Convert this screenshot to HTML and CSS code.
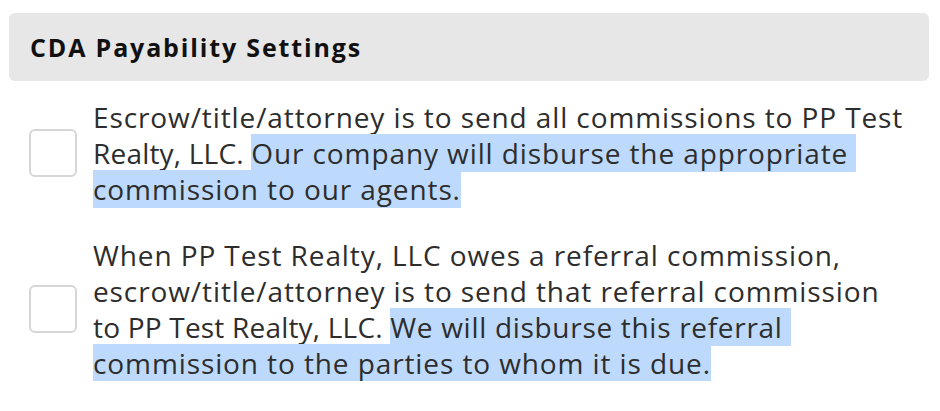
FILE: index.html
```html
<!DOCTYPE html>
<html lang="en">
<head>
<meta charset="utf-8">
<title>CDA Payability Settings</title>
<link rel="stylesheet" href="styles.css">
</head>
<body>
<div class="panel">
  <div class="section-header">
    <h2 class="section-title">CDA Payability Settings</h2>
  </div>
  <ul class="options">
    <li class="option">
      <input class="checkbox" type="checkbox" aria-label="Send all commissions to brokerage">
      <p class="option-text">Escrow/title/attorney is to send all commissions to PP Test<br><span class="lead">Realty, LLC. </span><span class="sel">Our company will disburse the appropriate&nbsp;</span><br><span class="sel">commission to our agents.</span></p>
    </li>
    <li class="option">
      <input class="checkbox" type="checkbox" aria-label="Send referral commission to brokerage">
      <p class="option-text">When PP Test Realty, LLC owes a referral commission,<br>escrow/title/attorney is to send that referral commission<br><span class="lead">to PP Test Realty, LLC. </span><span class="sel tight">We will disburse this referral&nbsp;</span><br><span class="sel">commission to the parties to whom it is due.</span></p>
    </li>
  </ul>
</div>
</body>
</html>
```

FILE: styles.css
```css
html, body {
  margin: 0;
  background: #ffffff;
}

body {
  font-family: "Open Sans", "Noto Sans", sans-serif;
  color: #2d2d2d;
}

.panel {
  padding: 13px 11px 0 9px;
}

.section-header {
  background: #e7e7e7;
  border-radius: 6px;
  height: 68px;
  display: flex;
  align-items: center;
  padding-left: 21px;
}

.section-title {
  margin: 0;
  font-size: 25px;
  font-weight: 700;
  letter-spacing: 1.85px;
  color: #111111;
}

.options {
  list-style: none;
  margin: 0;
  padding: 18px 0 0 20px;
  display: flex;
  flex-direction: column;
  gap: 30px;
}

.option {
  display: flex;
  align-items: center;
  gap: 16px;
}

.checkbox {
  appearance: none;
  -webkit-appearance: none;
  flex: none;
  margin: 0;
  width: 48px;
  height: 48px;
  border: 2px solid #d6d6d6;
  border-radius: 6px;
  background: #ffffff;
}

.option-text {
  margin: 0;
  font-size: 28px;
  line-height: 36px;
  letter-spacing: 0.9px;
  white-space: nowrap;
  color: #2d2d2d;
}

.lead {
  letter-spacing: 0.2px;
}

.sel {
  background: #bddafd;
}

.tight {
  letter-spacing: 0.7px;
}
```
